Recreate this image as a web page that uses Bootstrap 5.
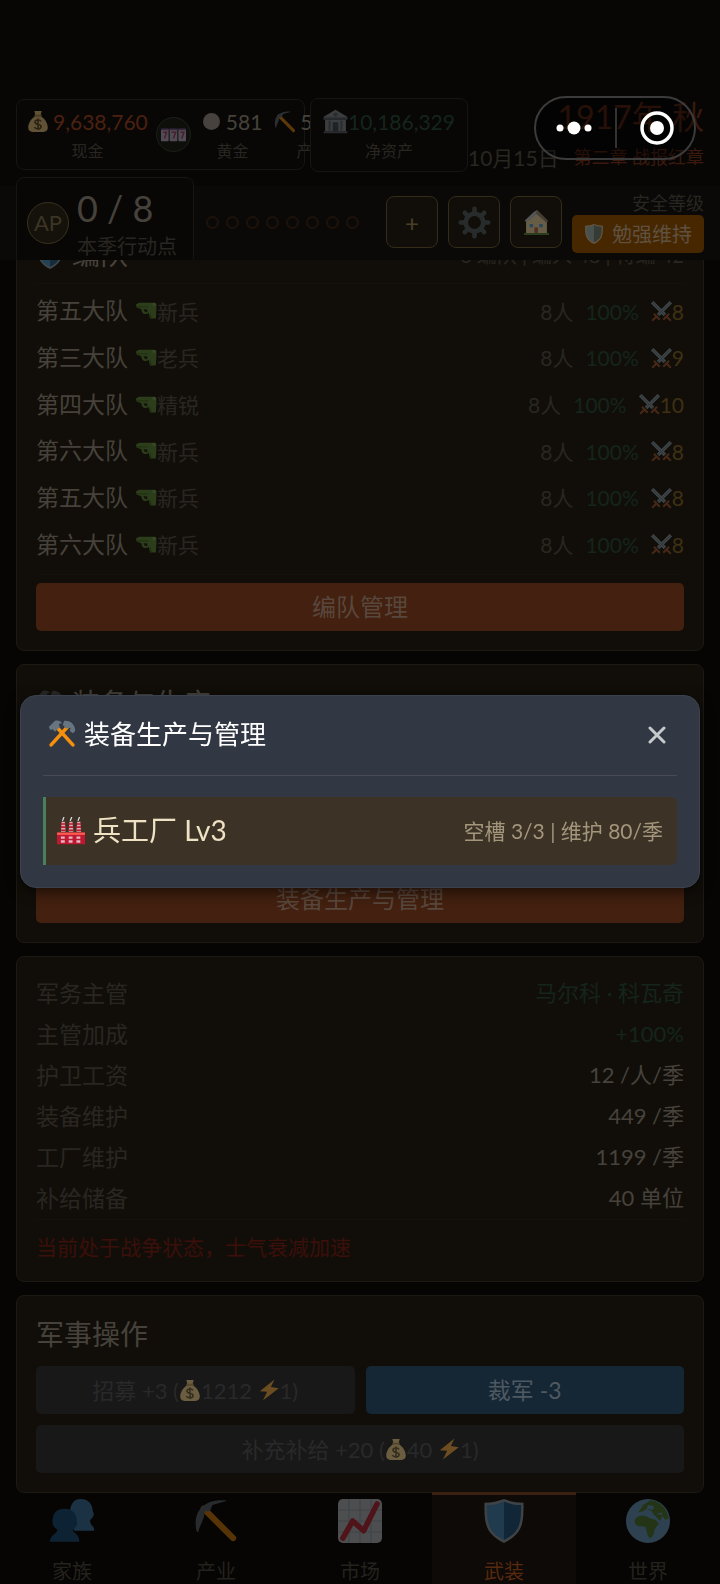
<!DOCTYPE html>
<html lang="zh-CN">
<head>
<meta charset="utf-8">
<meta name="viewport" content="width=device-width, initial-scale=1">
<title>武装</title>
<link href="https://cdn.jsdelivr.net/npm/bootstrap@5.3.0/dist/css/bootstrap.min.css" rel="stylesheet">
<style>
:root{--ink:#46423b;--soft:#292621;--line:#1d1a14;--panel:#110e09;--gold:#3f3013;--green:#14251b;--rust:#43200f}
body{background:#060504;color:var(--ink);font-family:Lato,"Noto Sans CJK SC",sans-serif;font-size:22px;line-height:1.3}
svg{flex:none;display:block}
.dim{opacity:.36}
.dimmer{opacity:.26}
.soft{color:var(--soft)}
.green{color:var(--green)}
.gold{color:var(--gold)}
.t16{font-size:16px}.t18{font-size:18px}.t20{font-size:20px}.t21{font-size:21px}.t23{font-size:23px}.t28{font-size:28px}
/* header */
.topbar{height:260px;padding:98px 16px 0;background:linear-gradient(#070605 186px,#0a0908 0);z-index:2;overflow:hidden}
.purse{flex:0 0 294px;overflow:hidden}
.frame{border:1px solid #171511;border-radius:8px;background:#080706}
.purse .frame{width:289px;height:71px;padding:8px 10px;margin-top:1px;white-space:nowrap}
.frame .t16{line-height:21px;margin-top:5px}
.worth{width:158px;height:74px;padding:9px 4px}
.cash{color:#4c2110}
.chip{flex:none;width:35px;height:35px;border:1px solid #1c2019;background:#0e0e0b}
.coin{width:17px;height:17px;background:#47423d}
.goldbox{gap:6px}
.year{font-size:32px;line-height:38px;color:#3b1a0d}
.chapter{color:#3b1a0d}
.apbox{width:178px;height:88px;padding:8px 10px;margin-top:5px}
.apmark{width:42px;height:42px;border:1px solid #3a311c;background:#15110b;color:#3c3525}
.apnum{font-size:36px;line-height:44px}
.aplabel{line-height:32px}
.pips{gap:7px}
.pip{width:13px;height:13px;border:2px solid #1d120b}
.tools{gap:10px;margin-right:10px}
.tool{width:52px;height:52px;padding:0;border:1px solid #332c19;border-radius:8px;background:#110e09;color:#4a3f26;font-size:24px}
.level{height:38px;padding:0 12px;border-radius:5px;background:#472700;color:#5e5140}
/* panels */
.scroll{margin-top:-45px;padding:0 16px;gap:13px}
.panel{border:1px solid var(--line);border-radius:8px;background:var(--panel);padding:19px}
.phead{height:40px}
.rule{border-bottom:1px solid #14110c}
.squads{height:280px;margin-top:4px}
.squads+.rule{padding-top:6px}
.act{height:48px;padding:0;border:0;border-radius:5px;font-size:24px;color:#58473c;background:var(--rust)}
.act:hover{background:#4d2612;color:#58473c}
.act.cut{background:#152634;color:#4f5962;font-size:23px}
.act:disabled{background:#181818;color:#292929;font-size:22px;opacity:1}
.gear{min-height:279px}
.facts{padding:16px 19px 20px}
.facts dl>div{height:41px}
.facts dt,.facts dd{font-weight:400;margin:0}
.warn{color:#3c0f0a;line-height:28px;margin-top:13px}
.ops{gap:11px}
.ops.flex-column{padding-top:3px}
/* tabs */
.tabs{height:92px;margin-top:-1px;background:#060504}
.tabs a{color:#25221d;text-decoration:none;padding-top:4px;border-top:3px solid transparent;gap:15px}
.tabs a.active{background:#0d0a07;border-color:#3c2012;color:#57290f}
.tabs svg{opacity:.34}
/* dialog */
.veil{z-index:5;padding:0 20px 2px}
.sheet{border:1px solid #3c414e;border-radius:16px;background:#323744;box-shadow:0 4px 14px rgba(0,0,0,.6);padding:11px 22px 22px}
.sheet header{height:69px;border-bottom:1px solid #474a55;padding:0 8px 12px 5px;color:#fff;font-size:26px}
.closer{background:none;border:0;padding:3px}
.plant{height:68px;margin-top:21px;padding:0 14px 0 11px;border-left:3px solid #47805a;border-radius:0 6px 6px 0;background:#3c3326;color:#efe2c4}
.plant .note{color:#a4967c}
.capsule{position:absolute;z-index:6;top:96px;right:24px;width:162px;height:64px;padding:0 8px;border:2px solid #3b3b3b;border-radius:32px;background:rgba(0,0,0,.35)}
.capsule button{background:none;border:0;padding:0}
.capsule i{width:2px;height:40px;background:#333}
</style>
</head>
<body>
<svg width="0" height="0" class="position-absolute" aria-hidden="true">
<symbol id="bag" viewBox="0 0 36 36"><path fill="#fdd888" d="M12 1h12l-2 8c7 4 12 12 12 19 0 5-3 7-7 7H9c-4 0-7-2-7-7C2 21 7 13 14 9z"/><path fill="#bf9a50" d="M12 7h12v3H12z"/><path fill="none" stroke="#67532a" stroke-width="2.6" d="M23 18c-2-4-10-3-10 1 0 5 10 3 10 7 0 5-9 5-11 1M18 13v19"/></symbol>
<symbol id="pick" viewBox="0 0 36 36"><path stroke="#f4900c" stroke-width="5" stroke-linecap="round" d="M8 8l24 24"/><path fill="#66757f" d="M2 26C-1 12 6 0 25 1c2 0 2 1 0 1l-10 3-2 5-4 0-1 5-4 10c0 2-1 3-2 1z"/></symbol>
<symbol id="bank" viewBox="0 0 36 36"><path fill="#ccd6dd" d="M18 1l17 10v4H1v-4zM3 16h30v16H3z"/><path fill="#8899a6" d="M1 12h34v3H1zM1 32h34v3H1zM8 17h3v14H8zM25 17h3v14h-3z"/><path fill="#66757f" d="M14 19h8v13h-8z"/><circle cx="18" cy="8" r="3" fill="#8899a6"/></symbol>
<symbol id="slots" viewBox="0 0 36 18"><g fill="#c9b7d8"><rect width="11" height="18" rx="1"/><rect x="12.500" width="11" height="18" rx="1"/><rect x="25" width="11" height="18" rx="1"/></g><path fill="none" stroke="#b04060" stroke-width="2.200" d="M3 5h5l-3 9M15 5h6l-3 9M28 5h5l-3 9"/><path stroke="#7d4c9e" stroke-width="2" d="M0 1h36"/></symbol>
<symbol id="gear" viewBox="0 0 36 36"><g stroke="#66808f" stroke-width="5" stroke-linecap="round"><path d="M18 3v30M3 18h30M7.400 7.400l21.200 21.200M28.600 7.400L7.400 28.600"/></g><circle cx="18" cy="18" r="12" fill="#66808f"/><circle cx="18" cy="18" r="7" fill="#110e09"/></symbol>
<symbol id="house" viewBox="0 0 36 36"><path fill="#5c913b" d="M0 33h36v3H0z"/><path fill="#ffe8b6" d="M3 15L15 4l4-3 14 14v18H3z"/><path fill="#ccd6dd" d="M1 15L14 3 19 0v6L4 18z"/><path fill="#a0957b" d="M19 0l16 16-3 2L17 5z"/><path fill="#55acee" d="M8 20h5v5H8zM22 20h5v5h-5z"/><path fill="#c1694f" d="M15 25h5v8h-5z"/></symbol>
<symbol id="shield" viewBox="0 0 36 36"><path fill="#9fb0bd" d="M18 0c5 2 10 3 16 3 0 16 0 25-16 33C2 28 2 19 2 3c6 0 11-1 16-3z"/><path fill="#4a9bd8" d="M18 2v31.500C4 27 4 18 4 5c5 0 9-1 14-3z"/><path fill="#1b5f94" d="M18 2v31.500C32 27 32 18 32 5c-5 0-9-1-14-3z"/></symbol>
<symbol id="gun" viewBox="0 0 36 30"><path fill="#5c913b" d="M0 4l5-3h27l3 2v8l-1 17H24l-2-10c-2 2-4 2-7 2-4 0-5-4-6-8L1 9z"/><path fill="#3e721d" d="M2 7h19v2H2zM24 15l3 12h-3z"/><path fill="#17220c" d="M13 12h6l1 4c-3 2-6 1-7-4z"/><circle cx="31" cy="4" r="3" fill="#77b255"/></symbol>
<symbol id="swords" viewBox="0 0 36 36"><path stroke="#8ba3b5" stroke-width="6" d="M2 2l22 22M34 2L12 24"/><path stroke="#66757f" stroke-width="1.500" d="M2 2l22 22M34 2L12 24"/><path fill="none" stroke="#a8562f" stroke-width="3.500" d="M5 22l10 10M2 34l7-7M31 22L21 32M34 34l-7-7"/></symbol>
<symbol id="hammers" viewBox="0 0 36 36"><path stroke="#f4900c" stroke-width="4.600" stroke-linecap="round" d="M4 32L25 9M32 32L11 9"/><path fill="#66757f" d="M1 9l8-8c4-1 7 0 9 3l-4 1 1 4-6 6-3-3-3 1zM21 1c7-1 14 4 14 13l-3 3-4-3 1-4-6 1-4-5z"/></symbol>
<symbol id="plant" viewBox="0 0 36 36"><path fill="#be1931" d="M0 20h36v15H0z"/><path fill="#ff5a4f" d="M0 20h36v3H0z"/><path fill="#e8a7b0" d="M6 6h4l1 13H5zM16 6h4l1 13h-6zM26 6h4l1 13h-6z"/><path stroke="#be1931" stroke-width="2" d="M5 9h6M15 9h6M25 9h6M5 13h6M15 13h6M25 13h6M5 17h6M15 17h6M25 17h6"/><path fill="none" stroke="#dfe5ea" stroke-width="1.600" d="M7 5l2-5M17 5l2-5M27 5l2-5"/><path fill="#e6b5c4" d="M5 25h5v3H5zM15 25h5v3h-5zM25 25h5v3h-5zM5 30h5v3H5zM15 30h5v3h-5zM25 30h5v3h-5z"/></symbol>
<symbol id="bolt" viewBox="0 0 36 36"><path fill="#ffac33" d="M27 1L3 20l12 1L8 35l26-20-13-2z"/></symbol>
<symbol id="people" viewBox="0 0 36 36"><path fill="#4289c1" d="M25 0c7 0 10 5 10 10 2 3 0 5-2 7-1 4 3 5 4 9H20l-4-10C16 6 18 0 25 0z"/><path fill="#1d5f92" d="M12 8c7 0 10 5 10 10 1 4-1 5-3 7-1 3 5 3 5 10H0c0-6 6-6 6-10-3-2-4-4-4-6C2 12 5 8 12 8z"/></symbol>
<symbol id="chart" viewBox="0 0 36 36"><rect width="36" height="36" rx="4" fill="#d3dae0"/><path stroke="#b4c0ca" d="M9 0v36M18 0v36M27 0v36M0 9h36M0 18h36M0 27h36"/><path fill="none" stroke="#dd2e44" stroke-width="4.500" stroke-linecap="round" stroke-linejoin="round" d="M4 32l8-14 9 8L32 4"/></symbol>
<symbol id="globe" viewBox="0 0 36 36"><circle cx="18" cy="18" r="18" fill="#78b5e2"/><path fill="#5c913b" d="M7 18c1-4 5-5 9-4l4 2 4 1 3 3c-2 3-4 4-4 8-1 2-2 4-4 4-2-3-2-6-3-9-4-1-9 0-9-5zM10 11l4-6 6-4c7 0 14 7 15 15l-3 1-2-3-2 4-5-5-2-3-4-2-3 2z"/><path fill="#78b5e2" d="M18 5l5 1-1 3-5-1zM25 12l5-1-1 2z"/></symbol>
</svg>

<header class="topbar position-relative">
  <div class="d-flex">
    <div class="purse">
      <div class="frame d-flex gap-2">
        <div class="text-center">
          <div class="d-flex align-items-center gap-1 cash t21"><svg class="dim" width="22" height="23"><use href="#bag"/></svg>9,638,760</div>
          <div class="t16 soft">现金</div>
        </div>
        <div class="chip rounded-circle d-flex align-items-center justify-content-center align-self-center"><svg class="dim" width="25" height="14"><use href="#slots"/></svg></div>
        <div class="text-center ps-1">
          <div class="goldbox d-flex align-items-center t21"><span class="coin rounded-circle"></span>581</div>
          <div class="t16 soft">黄金</div>
        </div>
        <div class="text-center">
          <div class="d-flex align-items-center ps-1 t21"><svg class="dim me-1" width="22" height="22"><use href="#pick"/></svg>5</div>
          <div class="t16 soft text-end">产</div>
        </div>
      </div>
    </div>
    <div class="worth frame flex-shrink-0 text-center">
      <div class="d-flex align-items-center justify-content-center green t21"><svg class="dimmer" width="25" height="25"><use href="#bank"/></svg>10,186,329</div>
      <div class="t16 soft">净资产</div>
    </div>
    <div class="flex-grow-1 text-end text-nowrap">
      <div class="year">1917年 秋</div>
      <div class="d-flex justify-content-between align-items-center pt-2"><span class="soft t21">10月15日</span><span class="t18 chapter">第二章 战报红章</span></div>
    </div>
  </div>
  <div class="d-flex">
    <div class="apbox frame d-flex">
      <div class="apmark rounded-circle flex-shrink-0 d-flex align-items-center justify-content-center mt-3">AP</div>
      <div class="ps-2 text-nowrap"><div class="apnum">0 / 8</div><div class="aplabel t20 soft">本季行动点</div></div>
    </div>
    <div class="d-flex flex-grow-1 align-items-center justify-content-between pt-2 ps-2">
      <div class="pips d-flex ps-1">
        <span class="pip rounded-circle"></span><span class="pip rounded-circle"></span><span class="pip rounded-circle"></span><span class="pip rounded-circle"></span><span class="pip rounded-circle"></span><span class="pip rounded-circle"></span><span class="pip rounded-circle"></span><span class="pip rounded-circle"></span>
      </div>
      <div class="d-flex align-items-center">
        <div class="tools d-flex">
          <button class="tool" aria-label="增加">+</button>
          <button class="tool d-flex align-items-center justify-content-center" aria-label="设置"><svg class="dimmer" width="33" height="33"><use href="#gear"/></svg></button>
          <button class="tool d-flex align-items-center justify-content-center" aria-label="主页"><svg class="dim" width="25" height="25"><use href="#house"/></svg></button>
        </div>
        <div class="text-end text-nowrap">
          <div class="t18 soft">安全等级</div>
          <div class="level d-flex align-items-center gap-2 t20"><svg class="dim" width="20" height="20"><use href="#shield"/></svg>勉强维持</div>
        </div>
      </div>
    </div>
  </div>
</header>

<main class="scroll d-flex flex-column">
  <section class="panel">
    <div class="rule pb-2"><div class="phead d-flex justify-content-between align-items-center">
      <h2 class="t28 m-0 fw-normal d-flex align-items-center gap-2"><svg class="dim" width="28" height="28"><use href="#shield"/></svg>编队</h2>
      <span class="t20 soft">6 编队 | 编入 48 | 待编 42</span>
    </div></div>
    <ul class="squads list-unstyled d-flex flex-column mb-0">
      <li class="d-flex flex-fill align-items-center"><span class="t23">第五大队</span><svg class="dim ms-2" width="21" height="18"><use href="#gun"/></svg><span class="t21 soft">新兵</span><span class="ms-auto soft t21">8人</span><span class="green mx-2 px-1 t21">100%</span><svg class="dim" width="21" height="21"><use href="#swords"/></svg><span class="gold t21">8</span></li>
      <li class="d-flex flex-fill align-items-center"><span class="t23">第三大队</span><svg class="dim ms-2" width="21" height="18"><use href="#gun"/></svg><span class="t21 soft">老兵</span><span class="ms-auto soft t21">8人</span><span class="green mx-2 px-1 t21">100%</span><svg class="dim" width="21" height="21"><use href="#swords"/></svg><span class="gold t21">9</span></li>
      <li class="d-flex flex-fill align-items-center"><span class="t23">第四大队</span><svg class="dim ms-2" width="21" height="18"><use href="#gun"/></svg><span class="t21 soft">精锐</span><span class="ms-auto soft t21">8人</span><span class="green mx-2 px-1 t21">100%</span><svg class="dim" width="21" height="21"><use href="#swords"/></svg><span class="gold t21">10</span></li>
      <li class="d-flex flex-fill align-items-center"><span class="t23">第六大队</span><svg class="dim ms-2" width="21" height="18"><use href="#gun"/></svg><span class="t21 soft">新兵</span><span class="ms-auto soft t21">8人</span><span class="green mx-2 px-1 t21">100%</span><svg class="dim" width="21" height="21"><use href="#swords"/></svg><span class="gold t21">8</span></li>
      <li class="d-flex flex-fill align-items-center"><span class="t23">第五大队</span><svg class="dim ms-2" width="21" height="18"><use href="#gun"/></svg><span class="t21 soft">新兵</span><span class="ms-auto soft t21">8人</span><span class="green mx-2 px-1 t21">100%</span><svg class="dim" width="21" height="21"><use href="#swords"/></svg><span class="gold t21">8</span></li>
      <li class="d-flex flex-fill align-items-center"><span class="t23">第六大队</span><svg class="dim ms-2" width="21" height="18"><use href="#gun"/></svg><span class="t21 soft">新兵</span><span class="ms-auto soft t21">8人</span><span class="green mx-2 px-1 t21">100%</span><svg class="dim" width="21" height="21"><use href="#swords"/></svg><span class="gold t21">8</span></li>
    </ul>
    <div class="rule mb-2"></div>
    <button class="btn act w-100 d-block">编队管理</button>
  </section>

  <section class="panel gear d-flex flex-column">
    <h2 class="phead t28 m-0 fw-normal d-flex align-items-center gap-2"><svg class="dimmer" width="28" height="28"><use href="#hammers"/></svg>装备与生产</h2>
    <button class="btn act w-100 mt-auto">装备生产与管理</button>
  </section>

  <section class="panel facts">
    <dl class="m-0 rule">
      <div class="d-flex justify-content-between align-items-center"><dt class="soft t23">军务主管</dt><dd class="green">马尔科 · 科瓦奇</dd></div>
      <div class="d-flex justify-content-between align-items-center"><dt class="soft t23">主管加成</dt><dd class="green">+100%</dd></div>
      <div class="d-flex justify-content-between align-items-center"><dt class="soft t23">护卫工资</dt><dd>12 /人/季</dd></div>
      <div class="d-flex justify-content-between align-items-center"><dt class="soft t23">装备维护</dt><dd>449 /季</dd></div>
      <div class="d-flex justify-content-between align-items-center"><dt class="soft t23">工厂维护</dt><dd>1199 /季</dd></div>
      <div class="d-flex justify-content-between align-items-center"><dt class="soft t23">补给储备</dt><dd>40 单位</dd></div>
    </dl>
    <p class="warn t21 mb-0">当前处于战争状态，士气衰减加速</p>
  </section>

  <section class="panel">
    <h2 class="phead t28 fw-normal d-flex align-items-center mb-2">军事操作</h2>
    <div class="ops d-flex flex-column">
      <div class="ops d-flex">
        <button class="btn act w-50 d-flex align-items-center justify-content-center" disabled>招募 +3 (<svg class="dim" width="22" height="23"><use href="#bag"/></svg>1212&nbsp;<svg class="dim" width="22" height="22"><use href="#bolt"/></svg>1)</button>
        <button class="btn act cut w-50">裁军 -3</button>
      </div>
      <button class="btn act w-100 d-flex align-items-center justify-content-center" disabled>补充补给 +20 (<svg class="dim" width="22" height="23"><use href="#bag"/></svg>40&nbsp;<svg class="dim" width="22" height="22"><use href="#bolt"/></svg>1)</button>
    </div>
  </section>
</main>

<nav class="tabs d-flex t20 overflow-hidden">
  <a href="#family" class="flex-fill w-100 d-flex flex-column align-items-center"><svg width="44" height="44"><use href="#people"/></svg>家族</a>
  <a href="#industry" class="flex-fill w-100 d-flex flex-column align-items-center"><svg width="44" height="44"><use href="#pick"/></svg>产业</a>
  <a href="#market" class="flex-fill w-100 d-flex flex-column align-items-center"><svg width="44" height="44"><use href="#chart"/></svg>市场</a>
  <a href="#arms" class="active flex-fill w-100 d-flex flex-column align-items-center"><svg width="44" height="44"><use href="#shield"/></svg>武装</a>
  <a href="#world" class="flex-fill w-100 d-flex flex-column align-items-center"><svg width="44" height="44"><use href="#globe"/></svg>世界</a>
</nav>

<div class="veil position-fixed top-0 start-0 w-100 h-100 d-flex align-items-center">
  <div class="sheet w-100" role="dialog" aria-labelledby="sheet-title">
    <header class="d-flex align-items-center justify-content-between">
      <div class="d-flex align-items-center gap-2"><svg width="28" height="28"><use href="#hammers"/></svg><span id="sheet-title">装备生产与管理</span></div>
      <button class="closer d-flex" aria-label="关闭"><svg width="18" height="18" viewBox="0 0 18 18"><path stroke="#c6cacb" stroke-width="3" stroke-linecap="round" d="M2 2l14 14M16 2L2 16"/></svg></button>
    </header>
    <div class="plant d-flex align-items-center">
      <svg width="28" height="28"><use href="#plant"/></svg><span class="t28 ps-2">兵工厂 Lv3</span>
      <span class="note t21 ms-auto">空槽 3/3 | 维护 80/季</span>
    </div>
  </div>
</div>

<div class="capsule d-flex align-items-center justify-content-around">
  <button class="d-flex" aria-label="更多"><svg width="36" height="14" viewBox="0 0 36 14" fill="#fff"><circle cx="4" cy="7" r="3.500"/><circle cx="18" cy="7" r="6.500"/><circle cx="32" cy="7" r="3.500"/></svg></button>
  <i></i>
  <button class="d-flex" aria-label="关闭小程序"><svg width="34" height="34" viewBox="0 0 34 34"><circle cx="17" cy="17" r="15" fill="none" stroke="#fff" stroke-width="3.500"/><circle cx="17" cy="17" r="7" fill="#fff"/></svg></button>
</div>
<script src="https://cdn.jsdelivr.net/npm/bootstrap@5.3.0/dist/js/bootstrap.bundle.min.js"></script>
</body>
</html>
